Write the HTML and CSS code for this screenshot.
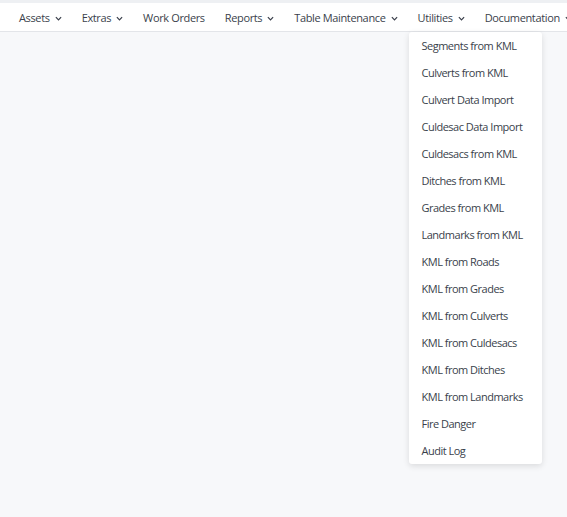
FILE: index.html
```html
<!DOCTYPE html>
<html lang="en">
<head>
    <meta charset="UTF-8">
    <meta name="viewport" content="width=device-width, initial-scale=1.0">
    <title>Utilities</title>
    <link rel="stylesheet" href="styles.css">
</head>
<body>
    <div class="page">
        <div class="top-strip"></div>
        <nav class="navbar">
            <ul class="nav-list">
                <li class="nav-item">Assets <svg class="caret" viewBox="0 0 8 5"><path d="M1 1l3 3 3-3"/></svg></li>
                <li class="nav-item">Extras <svg class="caret" viewBox="0 0 8 5"><path d="M1 1l3 3 3-3"/></svg></li>
                <li class="nav-item">Work Orders</li>
                <li class="nav-item">Reports <svg class="caret" viewBox="0 0 8 5"><path d="M1 1l3 3 3-3"/></svg></li>
                <li class="nav-item">Table Maintenance <svg class="caret" viewBox="0 0 8 5"><path d="M1 1l3 3 3-3"/></svg></li>
                <li class="nav-item open">Utilities <svg class="caret" viewBox="0 0 8 5"><path d="M1 1l3 3 3-3"/></svg>
                    <ul class="dropdown">
                        <li>Segments from KML</li>
                        <li>Culverts from KML</li>
                        <li>Culvert Data Import</li>
                        <li>Culdesac Data Import</li>
                        <li>Culdesacs from KML</li>
                        <li>Ditches from KML</li>
                        <li>Grades from KML</li>
                        <li>Landmarks from KML</li>
                        <li>KML from Roads</li>
                        <li>KML from Grades</li>
                        <li>KML from Culverts</li>
                        <li>KML from Culdesacs</li>
                        <li>KML from Ditches</li>
                        <li>KML from Landmarks</li>
                        <li>Fire Danger</li>
                        <li>Audit Log</li>
                    </ul>
                </li>
                <li class="nav-item">Documentation <svg class="caret" viewBox="0 0 8 5"><path d="M1 1l3 3 3-3"/></svg></li>
            </ul>
        </nav>
    </div>
</body>
</html>
```

FILE: styles.css
```css
html, body {
    height: 100%;
}

body {
    font-family: "Open Sans", "Noto Sans", Arial, sans-serif;
    font-size: 11px;
    background-color: #f7f8fa;
    color: #3a3f4b;
    margin: 0;
    padding: 0;
}

/* keeps the long menu bar from widening the page */
.page {
    height: 100vh;
    overflow: hidden;
}

.top-strip {
    height: 3px;
    background-color: #eef0f3;
}

.navbar {
    background-color: #fff;
    border-bottom: 1px solid #e3e5e9;
    height: 28px;
    position: relative;
    z-index: 5;
}

.nav-list {
    list-style: none;
    margin: 0;
    padding: 0 0 0 9px;
    display: flex;
    white-space: nowrap;
}

.nav-item {
    position: relative;
    display: flex;
    align-items: center;
    height: 28px;
    padding: 0 10px;
    letter-spacing: -0.36px;
}

.caret {
    width: 7px;
    height: 5px;
    margin-left: 5px;
    margin-top: 3px;
    fill: none;
    stroke: #3a3f4b;
    stroke-width: 1.4;
}

/* menu that is open */
.dropdown {
    position: absolute;
    z-index: 10;
    top: 29px;
    left: 1px;
    width: 133px;
    margin: 0;
    padding: 0;
    list-style: none;
    background-color: #fff;
    border-radius: 3px;
    box-shadow: 0 2px 6px rgba(0, 0, 0, 0.12);
}

.dropdown li {
    height: 27px;
    line-height: 27px;
    padding-left: 13px;
    letter-spacing: -0.5px;
}
```
